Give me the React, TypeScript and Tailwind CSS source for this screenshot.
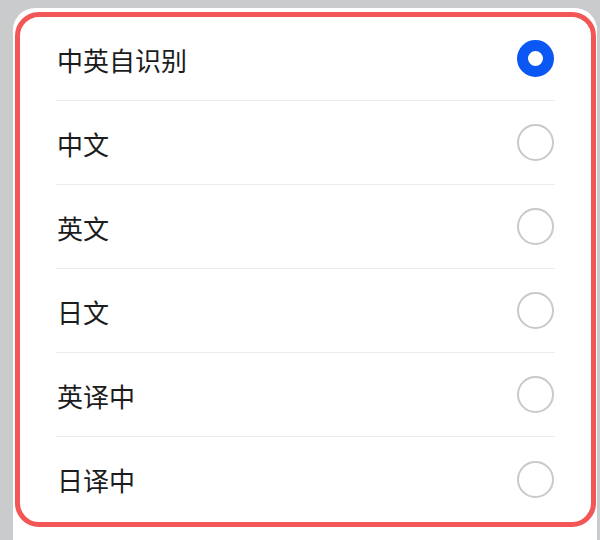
const options = ["中英自识别", "中文", "英文", "日文", "英译中", "日译中"];

export default function App() {
  const selected = 0;

  return (
    <div className="w-[600px] h-[540px] bg-[#c9cbcc] pl-[13px] pt-[8px] pr-[3px] flex flex-col overflow-hidden">
      <div className="flex-1 bg-white rounded-t-[22px] pt-[4px] pl-[2px] pr-[1px] pb-[13px]">
        <div className="h-full border-[5px] border-[#f25656] rounded-[24px] px-[36px] flex flex-col">
          {options.map((label, i) => (
            <div
              key={label}
              className={`h-[84px] flex items-center justify-between ${
                i < options.length - 1 ? "border-b border-[#ececec]" : ""
              }`}
            >
              <span className="pl-[1px] pt-[2px] text-[26px] text-[#1c1c1c] font-['Noto_Sans_CJK_SC',sans-serif] leading-none">
                {label}
              </span>
              {i === selected ? (
                <span className="w-[37px] h-[37px] mr-[1px] rounded-full border-[11px] border-[#0b57f4] bg-white" />
              ) : (
                <span className="w-[37px] h-[37px] mr-[1px] rounded-full border-2 border-[#c9c9c9] bg-white" />
              )}
            </div>
          ))}
        </div>
      </div>
    </div>
  );
}
